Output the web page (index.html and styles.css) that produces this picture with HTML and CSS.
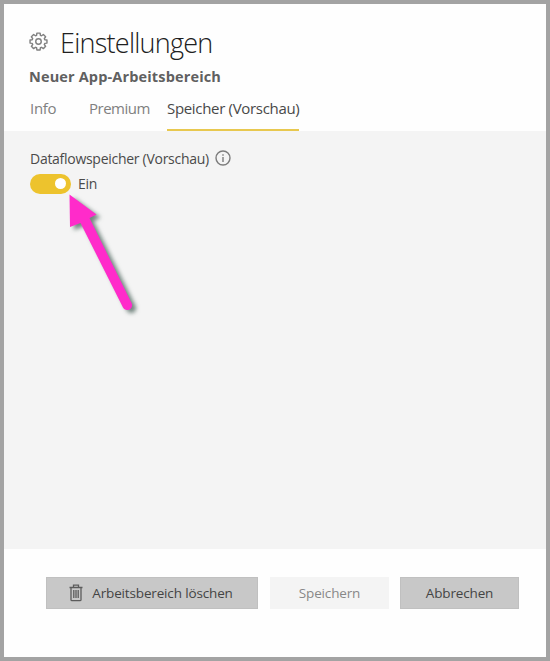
FILE: index.html
```html
<!DOCTYPE html>
<html lang="de">
<head>
<meta charset="utf-8">
<title>Einstellungen</title>
<link rel="stylesheet" href="styles.css">
</head>
<body>
<div class="panel">
  <header class="header">
    <div class="title-row">
      <svg class="gear" viewBox="0 0 20 20" fill="none" stroke="#808080" stroke-width="1.5" stroke-linejoin="round">
        <path d="M8.3 1.2h3.4l.3 2.3 1.2.5 1.9-1.4 2.4 2.4-1.4 1.9.5 1.2 2.3.3v3.3l-2.3.3-.5 1.2 1.4 1.9-2.4 2.4-1.9-1.4-1.2.5-.3 2.3H8.3L8 16.6l-1.2-.5-1.9 1.4-2.4-2.4 1.4-1.9-.5-1.2-2.3-.3V8.4l2.3-.3.5-1.2L2.500 5l2.400-2.400L6.800 4 8 3.500z"/>
        <circle cx="10" cy="10" r="2.900"/>
      </svg>
      <h1 class="title">Einstellungen</h1>
    </div>
    <h2 class="workspace">Neuer App-Arbeitsbereich</h2>
    <nav class="tabs">
      <a class="tab tab-info">Info</a>
      <a class="tab tab-premium">Premium</a>
      <a class="tab tab-active">Speicher (Vorschau)</a>
    </nav>
  </header>
  <main class="content">
    <div class="label-row">
      <span class="label">Dataflowspeicher (Vorschau)</span>
      <svg class="info" viewBox="0 0 16 16" fill="none" stroke="#7c7c7c">
        <circle cx="8" cy="8" r="7" stroke-width="1.400"/>
        <path d="M8 7v5M8 4.200v1.500" stroke-width="1.400"/>
      </svg>
    </div>
    <div class="toggle-row">
      <span class="toggle"><span class="knob"></span></span>
      <span class="state">Ein</span>
    </div>
    <svg class="arrow" viewBox="0 0 90 140">
      <path d="M9.500 14.500L36.500 34.500L29.500 38L71.500 123A4.800 4.800 0 0 1 63 127.500L20.500 43L10 47Z" fill="#ff2bca"/>
    </svg>
  </main>
  <footer class="footer">
    <button class="button delete">
      <svg class="trash" viewBox="0 0 14 18" fill="none" stroke="#5c5c5c" stroke-width="1.300">
        <path d="M.5 3.500h13M4.500 3.300V1.200h5v2.100M2 3.500v12.200q0 1 1 1h8q1 0 1-1V3.500M4.800 6v8M7 6v8M9.200 6v8"/>
      </svg>
      <span class="delete-text">Arbeitsbereich löschen</span>
    </button>
    <button class="button save" disabled><span class="save-text">Speichern</span></button>
    <button class="button cancel"><span class="cancel-text">Abbrechen</span></button>
  </footer>
</div>
</body>
</html>
```
FILE: styles.css
```css
* { box-sizing: border-box; }
body { margin: 0; font-family: "Noto Sans", "Open Sans", sans-serif; color: #4a4a4a; }
.panel { width: 550px; height: 661px; border: 4px solid #a3a3a3; background: #fefefe; display: flex; flex-direction: column; white-space: nowrap; }
.header { height: 127px; padding: 21px 0 0 25px; display: flex; flex-direction: column; }
.title-row { display: flex; align-items: center; height: 36px; }
.gear { width: 19px; height: 19px; margin-top: -3px; }
.title { margin: 0 0 0 12px; font-family: "Open Sans", "Noto Sans", sans-serif; font-size: 27px; line-height: 36px; font-weight: 300; letter-spacing: -0.75px; color: #202020; }
.workspace { margin: 4px 0 0; font-family: "Open Sans", "Noto Sans", sans-serif; font-size: 14.5px; line-height: 24px; font-weight: 700; letter-spacing: 0.15px; color: #606060; }
.tabs { display: flex; margin-top: 7px; height: 35px; }
.tab { font-family: "Open Sans", "Noto Sans", sans-serif; font-size: 15px; line-height: 25px; color: #808080; letter-spacing: -0.5px; }
.tab-info { width: 60px; padding-left: 1px; letter-spacing: -0.3px; }
.tab-premium { width: 78px; }
.tab-active { width: 132px; color: #484848; border-bottom: 2px solid #e8c84f; letter-spacing: -0.32px; }
.content { position: relative; height: 418px; padding: 15px 26px; background: #f4f4f4; }
.label-row { display: flex; align-items: center; height: 24px; }
.label { width: 185px; font-family: "Open Sans", "Noto Sans", sans-serif; font-size: 14px; letter-spacing: -0.28px; }
.info { width: 16px; height: 16px; }
.toggle-row { display: flex; align-items: center; margin-top: 3px; height: 21px; gap: 7px; }
.toggle { width: 41px; height: 20px; border-radius: 10px; background: #edc32d; display: flex; align-items: center; justify-content: flex-end; padding-right: 5px; }
.knob { width: 11px; height: 11px; border-radius: 50%; background: #fff; }
.state { font-family: "Open Sans", "Noto Sans", sans-serif; font-size: 14px; letter-spacing: -0.3px; }
.arrow { position: absolute; left: 56px; top: 49px; width: 90px; height: 140px; filter: drop-shadow(4px 3px 2px rgba(30, 60, 50, 0.6)); }
.footer { flex: 1; display: flex; align-items: flex-start; padding: 28px 0 0 42px; gap: 12px; }
.button { height: 32px; margin: 0; padding: 0; border: 1px solid #c0c0c0; background: #c8c8c8; color: #444; font: 13.5px/30px "Open Sans", "Noto Sans", sans-serif; letter-spacing: -0.15px; display: flex; align-items: center; justify-content: center; }
.delete { width: 212px; gap: 9px; padding-right: 2px; }
.trash { width: 14px; height: 18px; }
.save { width: 119px; background: #f4f4f4; border-color: #f4f4f4; color: #888; }
.cancel { width: 119px; margin-left: -1px; padding-bottom: 1px; }
```
